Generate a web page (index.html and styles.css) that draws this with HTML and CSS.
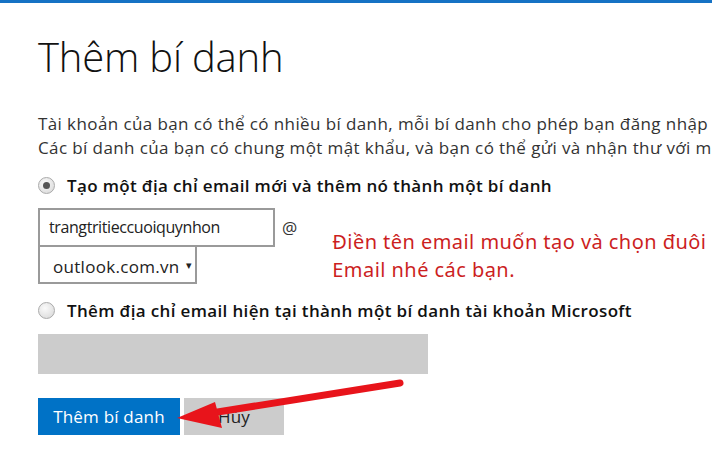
FILE: index.html
```html
<!DOCTYPE html>
<html lang="vi">
<head>
    <meta charset="UTF-8">
    <title>Thêm bí danh</title>
    <link rel="stylesheet" href="styles.css">
</head>
<body>
    <div class="top-bar"></div>
    <div class="page">
        <h1>Thêm bí danh</h1>
        <p class="intro">Tài khoản của bạn có thể có nhiều bí danh, mỗi bí danh cho phép bạn đăng nhập vào tài khoản của mình.<br>Các bí danh của bạn có chung một mật khẩu, và bạn có thể gửi và nhận thư với mỗi bí danh.</p>

        <label class="option">
            <span class="radio checked"></span>
            Tạo một địa chỉ email mới và thêm nó thành một bí danh
        </label>

        <div class="new-email">
            <div class="fields">
                <div class="name-row">
                    <div class="text-box">trangtritieccuoiquynhon</div>
                    <span class="at">@</span>
                </div>
                <div class="select-box">outlook.com.vn <span class="caret">▾</span></div>
            </div>
            <div class="note">Điền tên email muốn tạo và chọn đuôi<br>Email nhé các bạn.</div>
        </div>

        <label class="option second">
            <span class="radio"></span>
            Thêm địa chỉ email hiện tại thành một bí danh tài khoản Microsoft
        </label>

        <div class="disabled-box"></div>

        <div class="buttons">
            <button class="btn-primary">Thêm bí danh</button>
            <button class="btn-cancel">Hủy</button>
        </div>
    </div>

    <svg class="arrow" width="712" height="463" viewBox="0 0 712 463">
        <line x1="400" y1="383" x2="205" y2="414" stroke="#e8141b" stroke-width="7" stroke-linecap="round"/>
        <polygon points="177,418 215,402 222,428" fill="#e8141b"/>
    </svg>
</body>
</html>
```

FILE: styles.css
```css
body {
    margin: 0;
    background: #fff;
    font-family: "Open Sans", "Noto Sans", sans-serif;
    color: #222;
    overflow: hidden;
    position: relative;
    height: 463px;
}
.top-bar {
    height: 3px;
    background: #1672c4;
}
.page {
    padding-left: 38px;
    white-space: nowrap;
    overflow: hidden;
}
h1 {
    font-weight: 300;
    font-size: 40px;
    line-height: 48px;
    margin: 30px 0 0;
    color: #111;
    letter-spacing: -0.2px;
}
.intro {
    font-size: 17px;
    line-height: 24px;
    margin: 31px 0 0;
    color: #333;
    letter-spacing: 0.4px;
}
.option {
    display: flex;
    align-items: center;
    gap: 12px;
    font-size: 17px;
    font-weight: 600;
    color: #111;
    height: 24px;
    margin-top: 13px;
    letter-spacing: 0.35px;
}
.option.second {
    margin-top: 14px;
}
.radio {
    width: 15px;
    height: 15px;
    border-radius: 50%;
    border: 1px solid #aaa;
    background: radial-gradient(circle at 40% 35%, #fafafa, #d6d6d6);
    position: relative;
}
.radio.checked::after {
    content: "";
    position: absolute;
    left: 4px;
    top: 4px;
    width: 7px;
    height: 7px;
    border-radius: 50%;
    background: #555;
}
.new-email {
    display: flex;
    margin-top: 11px;
}
.name-row {
    display: flex;
    align-items: center;
}
.text-box {
    width: 224px;
    height: 35px;
    border: 2px solid #9a9a9a;
    padding-left: 9px;
    font-size: 16px;
    line-height: 35px;
    color: #222;
    letter-spacing: -0.4px;
}
.at {
    font-size: 17px;
    margin-left: 7px;
    color: #333;
}
.select-box {
    width: 142px;
    height: 35px;
    border: 2px solid #9a9a9a;
    border-top: none;
    padding-left: 13px;
    font-size: 17px;
    line-height: 35px;
    color: #222;
    letter-spacing: 0.3px;
}
.caret {
    font-size: 11px;
    vertical-align: 4px;
    margin-left: 2px;
}
.note {
    margin: 20px 0 0 35px;
    font-family: "Noto Sans", sans-serif;
    font-size: 20px;
    line-height: 28px;
    color: #cc1f1f;
    letter-spacing: 0.45px;
}
.disabled-box {
    width: 390px;
    height: 40px;
    background: #cccccc;
    margin-top: 12px;
}
.buttons {
    display: flex;
    gap: 4px;
    margin-top: 24px;
}
button {
    height: 37px;
    border: none;
    font-family: "Open Sans", "Noto Sans", sans-serif;
    font-size: 17px;
    letter-spacing: 0.2px;
    padding: 0;
}
.btn-primary {
    width: 142px;
    background: #0072c6;
    color: #fff;
}
.btn-cancel {
    width: 100px;
    background: #cccccc;
    color: #222;
}
.arrow {
    position: absolute;
    left: 0;
    top: 0;
    pointer-events: none;
}
```
